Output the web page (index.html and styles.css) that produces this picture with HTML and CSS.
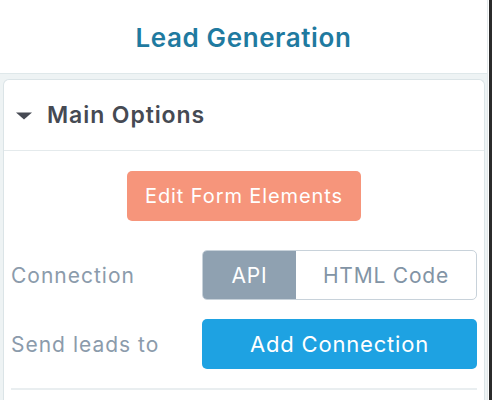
FILE: index.html
```html
<!DOCTYPE html>
<html>
<head>
<meta charset="utf-8">
<link rel="stylesheet" href="styles.css">
</head>
<body>
<div class="frame">
  <div class="panel">
    <header class="top">
      <h1 class="title">Lead Generation</h1>
    </header>
    <div class="content">
      <section class="card">
        <div class="card-head">
          <svg class="caret" width="16" height="8" viewBox="0 0 16 8"><path d="M0 0.5 L16 0.5 L8 7.5 Z" fill="#464a53"/></svg>
          <span class="card-title">Main Options</span>
        </div>
        <div class="card-body">
          <div class="center-row">
            <button class="btn btn-orange">Edit Form Elements</button>
          </div>
          <div class="field">
            <span class="label">Connection</span>
            <div class="segment">
              <span class="seg seg-on">API</span>
              <span class="seg seg-off">HTML Code</span>
            </div>
          </div>
          <div class="field">
            <span class="label">Send leads to</span>
            <button class="btn btn-blue">Add Connection</button>
          </div>
          <div class="divider"></div>
        </div>
      </section>
    </div>
  </div>
  <div class="scrollbar"></div>
</div>
</body>
</html>
```
FILE: styles.css
```css
* { box-sizing: border-box; }
html, body { margin: 0; padding: 0; }
body {
  font-family: "Inter", "Roboto", "Liberation Sans", sans-serif;
  background: #ffffff;
  width: 492px;
  height: 400px;
  overflow: hidden;
}
.frame {
  display: flex;
  height: 400px;
}
.panel {
  width: 488px;
  display: flex;
  flex-direction: column;
  border-right: 1px solid #e2e8ea;
}
.scrollbar {
  width: 4px;
  background: linear-gradient(to right, #ffffff 0 1px, #2b2b2b 1px 100%);
}
.top {
  height: 74px;
  border-bottom: 1px solid #dfe8ea;
  display: flex;
  align-items: center;
  justify-content: center;
}
.title {
  margin: 0;
  padding-top: 1px;
  font-size: 26px;
  font-weight: 600;
  color: #1f7aa0;
  letter-spacing: 0.6px;
}
.content {
  flex: 1;
  background: #eef3f4;
  padding: 5px 2px 0 3px;
}
.card {
  background: #ffffff;
  border: 1px solid #dbe4e7;
  border-bottom: none;
  border-radius: 6px 6px 0 0;
  height: 100%;
}
.card-head {
  height: 71px;
  border-bottom: 1px solid #e4eaec;
  display: flex;
  align-items: center;
  padding-left: 12px;
  gap: 15px;
}
.caret { display: block; margin-top: 1px; }
.card-title {
  font-size: 23px;
  font-weight: 600;
  color: #464a53;
  letter-spacing: 0.9px;
}
.card-body {
  padding: 20px 7px 0 7px;
}
.center-row {
  display: flex;
  justify-content: center;
  margin-bottom: 29px;
}
.btn {
  border: none;
  border-radius: 5px;
  font-family: inherit;
  color: #ffffff;
  height: 50px;
  padding: 0;
}
.btn-orange {
  width: 234px;
  background: #f6957b;
  font-size: 20px;
  letter-spacing: 0.9px;
}
.btn-blue {
  width: 275px;
  background: #1ea2e2;
  font-size: 22px;
  letter-spacing: 0.8px;
}
.field {
  display: flex;
  align-items: center;
  height: 50px;
  margin-bottom: 19px;
}
.label {
  width: 191px;
  font-size: 21px;
  letter-spacing: 1px;
  color: #8b9bab;
  padding-top: 1px;
}
.segment {
  width: 275px;
  height: 50px;
  display: flex;
  border: 1px solid #c8d2da;
  border-radius: 5px;
  overflow: hidden;
}
.seg {
  display: flex;
  align-items: center;
  justify-content: center;
  font-size: 21px;
  letter-spacing: 0.8px;
}
.seg-on {
  width: 93px;
  background: #8fa1b1;
  color: #ffffff;
}
.seg-off {
  flex: 1;
  color: #8294a5;
}
.divider {
  height: 2px;
  background: #e9eef0;
  margin-top: 0;
  width: 466px;
}
```
